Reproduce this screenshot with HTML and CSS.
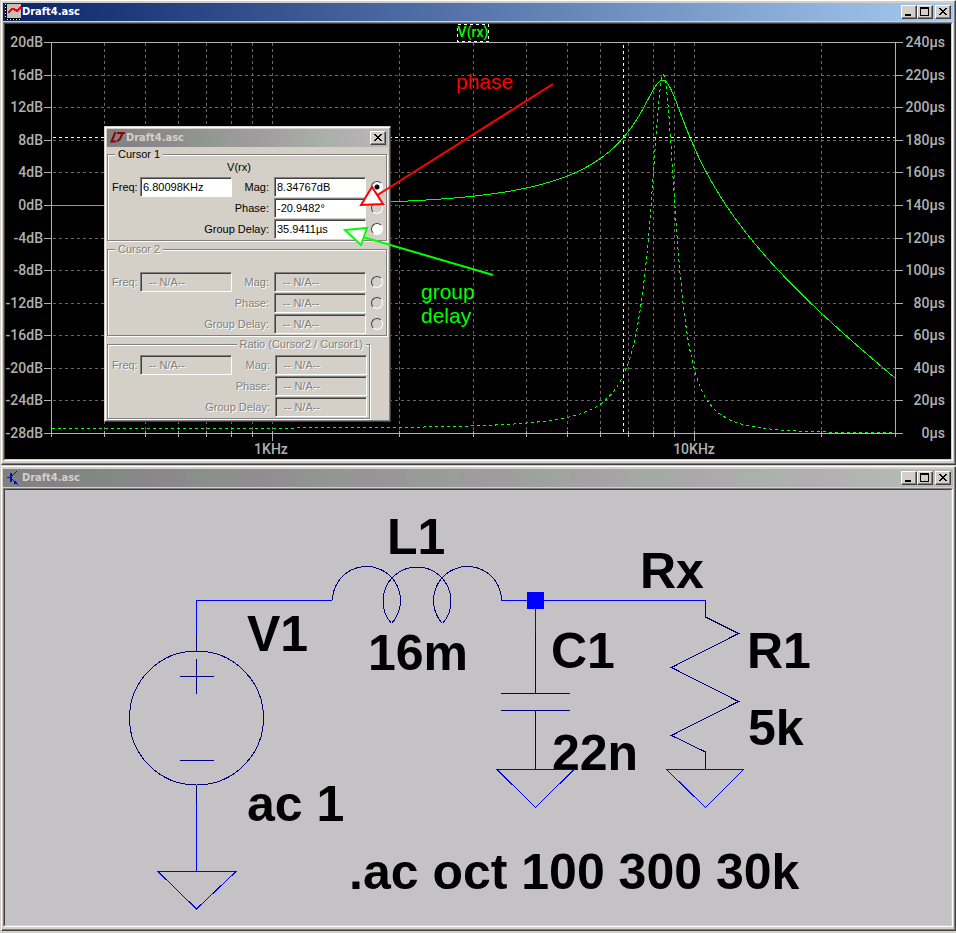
FILE: index.html
```html
<!DOCTYPE html>
<html lang="en">
<head>
<meta charset="utf-8">
<title>Draft4.asc</title>
<link rel="stylesheet" href="styles.css">
</head>
<body>
<main class="desktop">
  <section class="window">
    <header class="titlebar titlebar-active">
      <svg class="title-icon" width="18" height="18" viewBox="0 0 18 18" shape-rendering="crispEdges" aria-hidden="true">
        <path fill="#000" d="M1 1h2v16H1zM1 15h16v2H1z"/>
        <path stroke="#fff" stroke-dasharray="1 2" d="M1.500 1v14M3 16.500h14"/>
        <path fill="#c0c0c0" d="M3 1h14v14H3z"/>
        <path fill="none" stroke="#f00" stroke-width="2" d="M4 10l4-4h2l3 2 4-4"/>
      </svg>
      <h1 class="title">Draft4.asc</h1>
      <div class="controls">
        <button class="ctl" type="button" aria-label="Minimize"><svg width="12" height="10" viewBox="0 0 12 10" shape-rendering="crispEdges"><path d="M2 7h6v2H2z"/></svg></button>
        <button class="ctl" type="button" aria-label="Maximize"><svg width="12" height="10" viewBox="0 0 12 10" shape-rendering="crispEdges"><path fill-rule="evenodd" d="M1 0h9v9H1zM2 2v6h7V2z"/></svg></button>
        <button class="ctl ctl-close" type="button" aria-label="Close"><svg width="12" height="10" viewBox="0 0 12 10" shape-rendering="crispEdges"><path d="M2 1h2v1h1v1h2V2h1V1h2v1H9v1H8v1H7v1h1v1h1v1h1v1H8V7H7V6H5v1H4v1H2V7h1V6h1V5h1V4H4V3H3V2H2z"/></svg></button>
      </div>
    </header>
    <div class="pane pane-plot">
      <svg class="drawing" viewBox="5 24 946 435" role="img" aria-label="Magnitude and group delay of V(rx)">
        <g class="lines">
          <path class="grid" d="M53 75.500H895M53 107.500H895M53 140.500H895M53 172.500H895M53 205.500H895M53 238.500H895M53 270.500H895M53 303.500H895M53 335.500H895M53 368.500H895M53 400.500H895"/>
          <path class="grid" d="M104.500 43V433M145.500 43V433M178.500 43V433M206.500 43V433M231.500 43V433M252.500 43V433M272.500 43V433M399.500 43V433M473.500 43V433M526.500 43V433M567.500 43V433M600.500 43V433M628.500 43V433M653.500 43V433M674.500 43V433M694.500 43V433M821.500 43V433"/>
          <path class="axis" d="M44 42.500H903M44 433.500H903M51.500 42V437M895.500 42V437"/>
          <path class="axis" d="M44 75.500h7M44 107.500h7M44 140.500h7M44 172.500h7M44 205.500h7M44 238.500h7M44 270.500h7M44 303.500h7M44 335.500h7M44 368.500h7M44 400.500h7M896 75.500h7M896 107.500h7M896 140.500h7M896 172.500h7M896 205.500h7M896 238.500h7M896 270.500h7M896 303.500h7M896 335.500h7M896 368.500h7M896 400.500h7"/>
          <path class="axis" d="M104.500 431v6M145.500 431v6M178.500 431v6M206.500 431v6M231.500 431v6M252.500 431v6M272.500 431v10M399.500 431v6M473.500 431v6M526.500 431v6M567.500 431v6M600.500 431v6M628.500 431v6M653.500 431v6M674.500 431v6M694.500 431v10M821.500 431v6"/>
          <path class="trace" id="magnitude"/>
          <path class="trace trace-dashed" id="delay"/>
          <path class="cursor" d="M53 137.500H895M623.500 45V433"/>
          <rect class="label-box" x="457.500" y="24.500" width="31" height="17"/>
        </g>
        <g class="tick-text tick-end">
          <text x="43" y="47">20dB</text><text x="43" y="80">16dB</text><text x="43" y="112">12dB</text><text x="43" y="145">8dB</text><text x="43" y="177">4dB</text><text x="43" y="210">0dB</text><text x="43" y="243">-4dB</text><text x="43" y="275">-8dB</text><text x="43" y="308">-12dB</text><text x="43" y="340">-16dB</text><text x="43" y="373">-20dB</text><text x="43" y="405">-24dB</text><text x="43" y="438">-28dB</text>
          <text x="945" y="47">240µs</text><text x="945" y="80">220µs</text><text x="945" y="112">200µs</text><text x="945" y="145">180µs</text><text x="945" y="177">160µs</text><text x="945" y="210">140µs</text><text x="945" y="243">120µs</text><text x="945" y="275">100µs</text><text x="945" y="308">80µs</text><text x="945" y="340">60µs</text><text x="945" y="373">40µs</text><text x="945" y="405">20µs</text><text x="945" y="438">0µs</text>
        </g>
        <g class="tick-text tick-middle">
          <text x="271" y="454">1KHz</text><text x="694" y="454">10KHz</text>
          <text class="trace-name" x="473" y="37">V(rx)</text>
        </g>
      </svg>

      <form class="dialog">
        <header class="titlebar">
          <svg class="title-icon" width="16" height="16" viewBox="0 0 16 16" aria-hidden="true">
            <path fill="none" stroke="#900000" stroke-width="2" d="M6.500 2L2.500 11.500H7"/>
            <path fill="none" stroke="#900000" stroke-width="2" d="M8 3h8M13.500 3l-2.500 6-3 2.500"/>
          </svg>
          <h2 class="title">Draft4.asc</h2>
          <div class="controls">
            <button class="ctl" type="button" aria-label="Close"><svg width="12" height="10" viewBox="0 0 12 10" shape-rendering="crispEdges"><path d="M2 1h2v1h1v1h2V2h1V1h2v1H9v1H8v1H7v1h1v1h1v1h1v1H8V7H7V6H5v1H4v1H2V7h1V6h1V5h1V4H4V3H3V2H2z"/></svg></button>
          </div>
        </header>
        <fieldset class="group">
          <legend>Cursor 1</legend>
          <p class="signal">V(rx)</p>
          <div class="fields">
            <label for="f1">Freq:</label><input class="field" id="f1" value="6.80098KHz">
            <label for="m1">Mag:</label><input class="field" id="m1" value="8.34767dB">
            <input class="radio" type="radio" name="c1" aria-label="Attach to magnitude" checked>
            <label class="wide" for="p1">Phase:</label><input class="field" id="p1" value="-20.9482°">
            <input class="radio radio-off" type="radio" name="c1" aria-label="Attach to phase">
            <label class="wide" for="g1">Group Delay:</label><input class="field" id="g1" value="35.9411µs">
            <input class="radio" type="radio" name="c1" aria-label="Attach to group delay">
          </div>
        </fieldset>
        <fieldset class="group group-off" disabled>
          <legend>Cursor 2</legend>
          <p class="signal"></p>
          <div class="fields">
            <label for="f2">Freq:</label><input class="field" id="f2" value="-- N/A--">
            <label for="m2">Mag:</label><input class="field" id="m2" value="-- N/A--">
            <input class="radio radio-off" type="radio" name="c2" aria-label="Attach to magnitude">
            <label class="wide" for="p2">Phase:</label><input class="field" id="p2" value="-- N/A--">
            <input class="radio radio-off" type="radio" name="c2" aria-label="Attach to phase">
            <label class="wide" for="g2">Group Delay:</label><input class="field" id="g2" value="-- N/A--">
            <input class="radio radio-off" type="radio" name="c2" aria-label="Attach to group delay">
          </div>
        </fieldset>
        <fieldset class="group group-off group-ratio" disabled>
          <legend>Ratio (Cursor2 / Cursor1)</legend>
          <div class="fields fields-ratio">
            <label for="f3">Freq:</label><input class="field" id="f3" value="-- N/A--">
            <label for="m3">Mag:</label><input class="field" id="m3" value="-- N/A--">
            <label class="wide" for="p3">Phase:</label><input class="field" id="p3" value="-- N/A--">
            <label class="wide" for="g3">Group Delay:</label><input class="field" id="g3" value="-- N/A--">
          </div>
        </fieldset>
      </form>

      <svg class="drawing notes" viewBox="5 24 946 435">
        <g class="note-red">
          <path d="M553 84L376 196"/><path class="head" d="M361 205l11-18 11 17z"/>
          <text x="456" y="89">phase</text>
        </g>
        <g class="note-green">
          <path d="M493 275L363 237"/><path class="head" d="M345 230l22-2-6 17z"/>
          <text x="421" y="299">group</text><text x="421" y="323">delay</text>
        </g>
      </svg>
    </div>
  </section>

  <section class="window">
    <header class="titlebar">
      <svg class="title-icon" width="18" height="18" viewBox="0 0 18 18" shape-rendering="crispEdges" aria-hidden="true">
        <path fill="none" stroke="#00f" stroke-width="2" d="M7 4v9"/>
        <path fill="none" stroke="#00f" d="M3 8.500h3M8 7l5-5M8 10l5 5"/>
        <path fill="#00f" d="M9 14l3-2 2 4z"/>
      </svg>
      <h1 class="title">Draft4.asc</h1>
      <div class="controls">
        <button class="ctl" type="button" aria-label="Minimize"><svg width="12" height="10" viewBox="0 0 12 10" shape-rendering="crispEdges"><path d="M2 7h6v2H2z"/></svg></button>
        <button class="ctl" type="button" aria-label="Maximize"><svg width="12" height="10" viewBox="0 0 12 10" shape-rendering="crispEdges"><path fill-rule="evenodd" d="M1 0h9v9H1zM2 2v6h7V2z"/></svg></button>
        <button class="ctl ctl-close" type="button" aria-label="Close"><svg width="12" height="10" viewBox="0 0 12 10" shape-rendering="crispEdges"><path d="M2 1h2v1h1v1h2V2h1V1h2v1H9v1H8v1H7v1h1v1h1v1h1v1H8V7H7V6H5v1H4v1H2V7h1V6h1V5h1V4H4V3H3V2H2z"/></svg></button>
      </div>
    </header>
    <div class="pane pane-schematic">
      <svg class="drawing" viewBox="5 490 946 435" role="img" aria-label="RLC circuit schematic">
        <g class="part-text">
          <text x="387" y="554">L1</text><text x="247" y="651">V1</text><text x="368" y="670">16m</text>
          <text x="247" y="821">ac 1</text><text x="640" y="588">Rx</text><text x="551" y="668">C1</text>
          <text x="552" y="770">22n</text><text x="747" y="668">R1</text><text x="748" y="745">5k</text>
          <text x="349" y="889">.ac oct 100 300 30k</text>
        </g>
        <g class="lines">
          <path class="part" d="M332.500 600.500A34 34 0 1 1 391.500 623.500M391.500 623.500A34 34 0 1 1 442.500 623.500M442.500 623.500A34 34 0 1 1 501.500 600.500"/>
          <circle class="part" cx="196.500" cy="718" r="67"/>
          <path class="part" d="M180 676.500h34M196.500 659v35M180 760.500h34M196.500 634v17M196.500 785v18"/>
          <path class="part" d="M535.500 633v60M501 693.500h69M501 710.500h69M535.500 711v58"/>
          <path class="part" d="M705.500 601v16l33 16.500-67 34 67 34-67 34 34 16.500v17"/>
          <path class="wire" d="M332 600.500H196.500V634M196.500 803v68M501 600.500H706M535.500 609v24"/>
          <path class="wire" d="M158 871.500h78l-39.500 37.500zM497 769.500h77l-38.500 38zM666.500 769.500h77l-38 38z"/>
          <path fill="#00f" d="M527 592h17v17h-17z"/>
        </g>
      </svg>
    </div>
  </section>
</main>
<script src="plot.js"></script>
</body>
</html>
```
FILE: styles.css
```css
* { box-sizing: border-box; }

body {
  margin: 0;
  background: #d4d0c8;
  color: #000;
  font: 11px/14px "Liberation Sans", sans-serif;
}

.desktop {
  display: flex;
  flex-direction: column;
  gap: 1px;
  padding-left: 1px;
}

.window {
  border: 1px solid;
  border-color: #fff #404040 #404040 #fff;
  padding: 2px 2px 3px 1px;
  box-shadow: inset -1px -1px #808080;
}

.titlebar {
  display: flex;
  align-items: center;
  height: 18px;
  padding: 0 2px 0 1px;
  color: #d4d0c8;
  background:
    repeating-linear-gradient(90deg, rgba(140, 110, 150, .1) 0 55px, rgba(110, 150, 110, .1) 55px 110px) 18px 0,
    linear-gradient(90deg, #808080, #c0c0c0);
}

.titlebar-active {
  color: #fff;
  background: linear-gradient(90deg, #0a246a, #a6caf0);
}

.title-icon { flex: none; display: block; }

.title {
  flex: 1;
  margin: 0;
  font: bold 11px/18px "DejaVu Sans Condensed", "DejaVu Sans", sans-serif;
}

.controls { display: flex; }

.ctl {
  width: 16px;
  height: 14px;
  padding: 0;
  border: 1px solid;
  border-color: #fff #404040 #404040 #fff;
  background: #d4d0c8;
  box-shadow: inset -1px -1px #808080;
}

.ctl-close { margin-left: 2px; }

.ctl svg { display: block; margin: 1px; }

.pane {
  position: relative;
  margin-top: 1px;
  border: 1px solid;
  border-color: #808080 #fff #fff #808080;
}

.drawing {
  display: block;
  width: 100%;
  height: auto;
  border: 1px solid;
  border-color: #404040 #d4d0c8 #d4d0c8 #404040;
}

.pane-plot { background: #000; }
.pane-schematic { background: #c4c2c4; }

.lines { shape-rendering: crispEdges; fill: none; }
.grid { stroke: #686868; stroke-dasharray: 3 3; }
.axis { stroke: #b0b0b0; }
.trace { stroke: #0f0; }
.trace-dashed { stroke-dasharray: 3 3; }
.cursor, .label-box { stroke: #fff; stroke-dasharray: 3 3; }

.tick-text {
  font: 500 14px Roboto, sans-serif;
  fill: #b0b0b0;
}
.tick-end { text-anchor: end; }
.tick-middle { text-anchor: middle; }
.trace-name { fill: #0f0; }

.notes {
  position: absolute;
  inset: 0;
  border-color: transparent;
  pointer-events: none;
  font: 21px "Liberation Sans", sans-serif;
}
.notes path { stroke-width: 2; }
.notes .head { fill: #fff; }
.note-red { fill: #f00; }
.note-red path { stroke: #f00; }
.note-green { fill: #0f0; }
.note-green path { stroke: #0f0; }

.part-text { font: bold 50px "Liberation Sans", sans-serif; }
.part { stroke: #000080; }
.wire { stroke: #00f; }

.dialog {
  position: absolute;
  left: 100px;
  top: 103px;
  display: flex;
  flex-direction: column;
  gap: 2px;
  width: 287px;
  padding: 2px;
  border: 1px solid;
  border-color: #d4d0c8 #404040 #404040 #d4d0c8;
  box-shadow: inset 1px 1px #fff, inset -1px -1px #808080;
  background: #d4d0c8;
}

.dialog .titlebar { margin-bottom: -1px; }
.dialog .title-icon { margin: 0 1px; }

.group {
  min-width: 0;
  margin: 0 1px 0 0;
  padding: 0 0 1px 4px;
  border: 1px solid #808080;
  box-shadow: 1px 1px #fff, inset 1px 1px #fff;
}

.group legend {
  margin-left: 3px;
  padding: 0 3px;
  background: #d4d0c8;
  line-height: 12px;
}

.group-off {
  color: #808080;
  text-shadow: 1px 1px #fff;
}

.group-ratio {
  width: 263px;
  padding: 5px 2px 1px 4px;
}

.group-ratio legend { margin: 0 1px 0 auto; }

.signal {
  height: 17px;
  margin: 0;
  padding-right: 20px;
  text-align: center;
}

.fields {
  display: grid;
  grid-template-columns: 26px 92px 1fr 92px 18px;
  grid-auto-rows: 20px;
  gap: 1px 2px;
  align-items: center;
}

.fields-ratio { grid-template-columns: 26px 92px 1fr 92px; }

.fields label {
  padding-right: 3px;
  text-align: right;
  white-space: nowrap;
}

.wide { grid-column: 1 / 4; }

.field {
  width: 100%;
  height: 20px;
  margin: 0;
  padding: 0 2px;
  border: 1px solid;
  border-color: #808080 #fff #fff #808080;
  box-shadow: inset 1px 1px #404040;
  background: #fff;
  color: #000;
  font: inherit;
}

.group-off .field {
  padding-left: 8px;
  background: #d4d0c8;
  color: #808080;
  text-shadow: inherit;
}

.radio {
  appearance: none;
  justify-self: center;
  width: 12px;
  height: 12px;
  margin: 0;
  border: 1px solid;
  border-color: #404040 #fff #fff #404040;
  border-radius: 50%;
  background: #fff;
}

.radio:checked { background: radial-gradient(circle, #000 2px, #fff 3px); }
.radio-off { background: #d4d0c8; }
```
FILE: plot.js
```js
// AC response of the L1 / C1 / R1 low-pass, 300 Hz to 30 kHz.
const L = 16e-3, C = 22e-9, R = 5e3;
const LEFT = 51.5, TOP = 42.5, WIDTH = 844, HEIGHT = 391;

function response(f) {
  const w = 2 * Math.PI * f;
  const re = 1 - w * w * L * C;
  const im = w * L / R;
  const norm = re * re + im * im;
  return {
    db: -10 * Math.log10(norm),
    delay: (L / R) * (1 + w * w * L * C) / norm * 1e6
  };
}

let mag = "", delay = "";
for (let x = 0; x <= WIDTH; x++) {
  const p = response(300 * Math.pow(100, x / WIDTH));
  const cmd = x ? "L" : "M";
  mag += cmd + (LEFT + x) + " " + (TOP + (20 - p.db) / 48 * HEIGHT).toFixed(2);
  delay += cmd + (LEFT + x) + " " + (TOP + (240 - p.delay) / 240 * HEIGHT).toFixed(2);
}
document.getElementById("magnitude").setAttribute("d", mag);
document.getElementById("delay").setAttribute("d", delay);
```
